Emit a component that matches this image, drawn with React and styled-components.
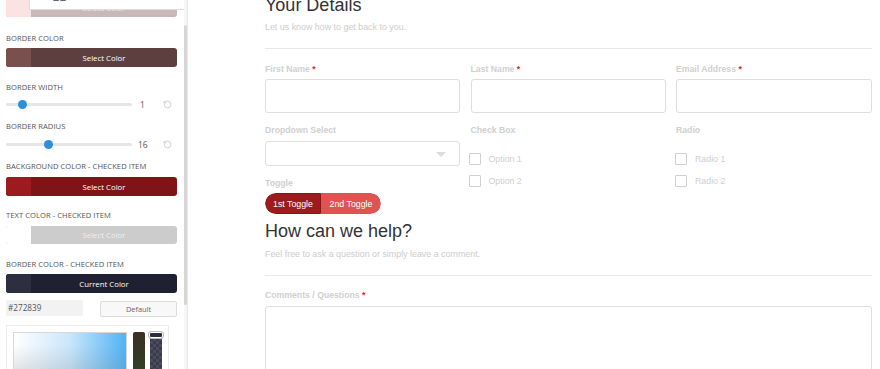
import React from "react";
import styled, { createGlobalStyle } from "styled-components";
import { RotateCcw } from "lucide-react";

const Global = createGlobalStyle`
  html, body { margin: 0; padding: 0; background: #fff; }
  body { width: 880px; height: 369px; overflow: hidden; }
  * { box-sizing: border-box; }
`;

const Page = styled.div`
  display: flex;
  width: 880px;
  height: 369px;
  overflow: hidden;
  background: #fff;
`;

/* ---------- Sidebar ---------- */
const Sidebar = styled.aside`
  position: relative;
  display: flex;
  flex: 0 0 188px;
  height: 369px;
  border-right: 1px solid #e8e8e8;
  overflow: hidden;
  font-family: "Open Sans", "Noto Sans", sans-serif;
`;

const SideContent = styled.div`
  display: block;
  flex: 0 0 177px;
  width: 177px;
  padding-left: 6px;
  margin-right: 7px;
`;

const ScrollTrack = styled.div`
  flex: 0 0 3px;
  height: 369px;
  background: #f6f6f6;
  padding-top: 25px;
`;

const ScrollThumb = styled.div`
  width: 3px;
  height: 280px;
  background: #d6d6d6;
  border-radius: 2px;
`;

const TopPopover = styled.div`
  position: absolute;
  left: 29px;
  top: 0;
  width: 155px;
  height: 10px;
  background: #fff;
  border-left: 1px solid #dcdcdc;
  border-bottom: 1px solid #dcdcdc;
  overflow: hidden;
`;

const PopGlyph = styled.span`
  display: block;
  margin: -9px 0 0 23px;
  font-family: "Liberation Sans", sans-serif;
  font-size: 11px;
  font-weight: 700;
  color: #666;
  letter-spacing: 1px;
`;

const Label = styled.div`
  margin-top: ${(p) => p.$top}px;
  font-size: 7.6px;
  line-height: 12px;
  color: #555;
  text-transform: uppercase;
  letter-spacing: 0.05px;
  white-space: nowrap;
`;

const ColorBar = styled.div`
  display: flex;
  height: ${(p) => p.$h || 19}px;
  margin-top: ${(p) => p.$top}px;
  border-radius: 3px;
  overflow: hidden;
  background: ${(p) => p.$main};
`;

const Swatch = styled.div`
  flex: 0 0 25px;
  background: ${(p) => p.$c};
`;

const BarText = styled.div`
  flex: 1;
  display: flex;
  align-items: center;
  justify-content: center;
  font-size: 7.8px;
  color: ${(p) => p.$c || "#fff"};
`;

const SliderRow = styled.div`
  display: flex;
  align-items: center;
  height: 12px;
  margin-top: ${(p) => p.$top}px;
`;

const Track = styled.div`
  position: relative;
  width: 126px;
  height: 3px;
  background: #e6e6e6;
  border-radius: 2px;
`;

const Knob = styled.div`
  position: absolute;
  top: -3px;
  width: 9px;
  height: 9px;
  border-radius: 50%;
  background: #2b8fdc;
`;

const Value = styled.span`
  width: 28px;
  padding-left: ${(p) => p.$pad}px;
  font-size: 8.5px;
  color: #555;
`;

const Reset = styled.span`
  display: flex;
  margin-left: 3px;
  color: #b5b5b5;
`;

const HexRow = styled.div`
  display: flex;
  justify-content: space-between;
  align-items: flex-start;
  margin-top: 7px;
`;

const HexInput = styled.div`
  width: 77px;
  height: 16px;
  background: #f2f2f2;
  border-radius: 2px;
  padding-left: 2px;
  font-size: 8.2px;
  line-height: 16px;
  color: #555;
`;

const DefaultBtn = styled.div`
  width: 77px;
  height: 16px;
  margin-top: 1px;
  border: 1px solid #dcdcdc;
  background: #f8f8f8;
  border-radius: 2px;
  font-size: 7.4px;
  line-height: 14px;
  text-align: center;
  color: #666;
`;

const Picker = styled.div`
  display: flex;
  gap: 6px;
  width: 163px;
  height: 60px;
  margin-top: 8px;
  padding: 6px 0 0 6px;
  border: 1px solid #ececec;
  border-bottom: none;
`;

const SatArea = styled.div`
  width: 114px;
  height: 60px;
  border: 1px solid #d8d8d8;
  background:
    linear-gradient(to bottom, rgba(0,0,0,0) 20%, rgba(120,120,120,0.35) 100%),
    linear-gradient(to right, #ffffff 0%, #c9e6fb 50%, #4fb3f6 100%);
`;

const HueBar = styled.div`
  width: 12px;
  height: 60px;
  border-radius: 2px;
  background: linear-gradient(to bottom, #3d2f27 0%, #343827 40%, #2f4a24 100%);
`;

const AlphaBar = styled.div`
  position: relative;
  width: 12px;
  height: 60px;
  margin-left: -1px;
  background-color: #3a3b4c;
  background-image:
    linear-gradient(45deg, #4a4b5c 25%, transparent 25%, transparent 75%, #4a4b5c 75%),
    linear-gradient(45deg, #4a4b5c 25%, transparent 25%, transparent 75%, #4a4b5c 75%);
  background-size: 6px 6px;
  background-position: 0 0, 3px 3px;
`;

const AlphaHandle = styled.div`
  position: absolute;
  left: -1px;
  top: 0;
  width: 14px;
  height: 6px;
  border: 1px solid #fff;
  outline: 1px solid #bbb;
  border-radius: 2px;
  background: #2b2c3e;
`;

/* ---------- Main ---------- */
const Main = styled.main`
  flex: 1;
  padding: 0 8px 0 77px;
  font-family: "Liberation Sans", Arial, sans-serif;
  overflow: hidden;
`;

const Heading = styled.h2`
  margin: ${(p) => p.$top}px 0 0;
  font-size: 18px;
  line-height: 21px;
  font-weight: 400;
  color: #333;
`;

const Sub = styled.p`
  margin: ${(p) => p.$top}px 0 0;
  font-size: 8.9px;
  line-height: 12px;
  color: #cdcdcd;
`;

const Divider = styled.hr`
  margin: ${(p) => p.$top}px 0 0;
  border: none;
  border-top: 1px solid #e8e8e8;
  height: 0;
`;

const Grid = styled.div`
  display: grid;
  grid-template-columns: 195px 195px 196px;
  column-gap: 10.5px;
  margin-top: ${(p) => p.$top}px;
  align-items: start;
`;

const Field = styled.div`
  display: flex;
  flex-direction: column;
  margin-top: ${(p) => p.$top || 0}px;
`;

const FieldLabel = styled.label`
  font-size: 8.7px;
  line-height: 12px;
  font-weight: 700;
  color: #d0d0d0;
`;

const Req = styled.span`
  color: #e3231b;
`;

const Input = styled.div`
  height: ${(p) => p.$h}px;
  margin-top: ${(p) => p.$top || 4}px;
  border: 1px solid #dedede;
  border-radius: 3px;
  background: #fff;
`;

const SelectBox = styled.div`
  display: flex;
  align-items: center;
  justify-content: flex-end;
  height: 25px;
  margin-top: 5px;
  padding-right: 13px;
  border: 1px solid #dedede;
  border-radius: 3px;
`;

const Caret = styled.span`
  width: 0;
  height: 0;
  margin-top: 1px;
  border-left: 5px solid transparent;
  border-right: 5px solid transparent;
  border-top: 5px solid #dcdcdc;
`;

const OptionList = styled.div`
  display: flex;
  flex-direction: column;
  gap: 10px;
  margin: 17px 0 0 ${(p) => p.$shift}px;
`;

const Option = styled.div`
  display: flex;
  align-items: center;
  gap: 8px;
  height: 12px;
  font-size: 8.8px;
  color: #cfcfcf;
`;

const Box = styled.span`
  width: 12px;
  height: 12px;
  border: 1px solid #d0d0d0;
  border-radius: 1px;
`;

const Toggle = styled.div`
  display: flex;
  width: 116px;
  height: 21px;
  margin-top: 4px;
  border-radius: 11px;
  overflow: hidden;
`;

const ToggleBtn = styled.div`
  display: flex;
  align-items: center;
  justify-content: center;
  width: ${(p) => p.$w}px;
  background: ${(p) => p.$bg};
  border: ${(p) => (p.$border ? `1px solid ${p.$border}` : "none")};
  border-radius: ${(p) => p.$r};
  font-size: 8.8px;
  color: #fff;
`;

const TextArea = styled.div`
  height: 80px;
  margin-top: 5px;
  border: 1px solid #dedede;
  border-radius: 3px;
`;

const Slider = ({ top, pos, value, pad }) => (
  <SliderRow $top={top}>
    <Track>
      <Knob style={{ left: pos }} />
    </Track>
    <Value $pad={pad}>{value}</Value>
    <Reset>
      <RotateCcw size={9} strokeWidth={1.6} />
    </Reset>
  </SliderRow>
);

const Bar = ({ top, swatch, main, text, textColor, h }) => (
  <ColorBar $top={top} $main={main} $h={h}>
    <Swatch $c={swatch} />
    <BarText $c={textColor}>{text}</BarText>
  </ColorBar>
);

export default function App() {
  return (
    <>
      <Global />
      <Page>
        <Sidebar>
          <SideContent>
            <Bar top={-2} swatch="#fbe3e3" main="#c9b8b8" text="Select Color" textColor="#eee" />
            <Label $top={15}>Border Color</Label>
            <Bar top={4} swatch="#7a504f" main="#5e3f3f" text="Select Color" />
            <Label $top={14}>Border Width</Label>
            <Slider top={5} pos={12} value="1" pad={8} />
            <Label $top={10}>Border Radius</Label>
            <Slider top={6} pos={38} value="16" pad={6} />
            <Label $top={10}>Background Color - Checked Item</Label>
            <Bar top={5} swatch="#9b1b1e" main="#7f1416" text="Select Color" />
            <Label $top={13}>Text Color - Checked Item</Label>
            <Bar top={5} h={18} swatch="#ffffff" main="#cccccc" text="Select Color" textColor="#eeeeee" />
            <Label $top={14}>Border Color - Checked Item</Label>
            <Bar top={4} swatch="#2d2e40" main="#1f2032" text="Current Color" />
            <HexRow>
              <HexInput>#272839</HexInput>
              <DefaultBtn>Default</DefaultBtn>
            </HexRow>
            <Picker>
              <SatArea />
              <HueBar />
              <AlphaBar>
                <AlphaHandle />
              </AlphaBar>
            </Picker>
          </SideContent>
          <ScrollTrack>
            <ScrollThumb />
          </ScrollTrack>
          <TopPopover>
            <PopGlyph>22</PopGlyph>
          </TopPopover>
        </Sidebar>

        <Main>
          <Heading $top={-5}>Your Details</Heading>
          <Sub $top={5}>Let us know how to get back to you.</Sub>
          <Divider $top={15} />
          <Grid $top={14}>
            <Field>
              <FieldLabel>First Name <Req>*</Req></FieldLabel>
              <Input $h={34} />
            </Field>
            <Field>
              <FieldLabel>Last Name <Req>*</Req></FieldLabel>
              <Input $h={34} />
            </Field>
            <Field>
              <FieldLabel>Email Address <Req>*</Req></FieldLabel>
              <Input $h={34} />
            </Field>
          </Grid>
          <Grid $top={11}>
            <Field>
              <FieldLabel>Dropdown Select</FieldLabel>
              <SelectBox>
                <Caret />
              </SelectBox>
              <Field $top={11}>
                <FieldLabel>Toggle</FieldLabel>
                <Toggle>
                  <ToggleBtn $w={56} $bg="#9b1b1e" $border="#8a1518" $r="11px 0 0 11px">1st Toggle</ToggleBtn>
                  <ToggleBtn $w={60} $bg="#e05353" $r="0 11px 11px 0">2nd Toggle</ToggleBtn>
                </Toggle>
              </Field>
            </Field>
            <Field>
              <FieldLabel>Check Box</FieldLabel>
              <OptionList $shift={-2}>
                <Option><Box />Option 1</Option>
                <Option><Box />Option 2</Option>
              </OptionList>
            </Field>
            <Field>
              <FieldLabel>Radio</FieldLabel>
              <OptionList $shift={-1}>
                <Option><Box />Radio 1</Option>
                <Option><Box />Radio 2</Option>
              </OptionList>
            </Field>
          </Grid>
          <Heading $top={7}>How can we help?</Heading>
          <Sub $top={6}>Feel free to ask a question or simply leave a comment.</Sub>
          <Divider $top={15} />
          <Field $top={13}>
            <FieldLabel>Comments / Questions <Req>*</Req></FieldLabel>
            <TextArea />
          </Field>
        </Main>
      </Page>
    </>
  );
}
